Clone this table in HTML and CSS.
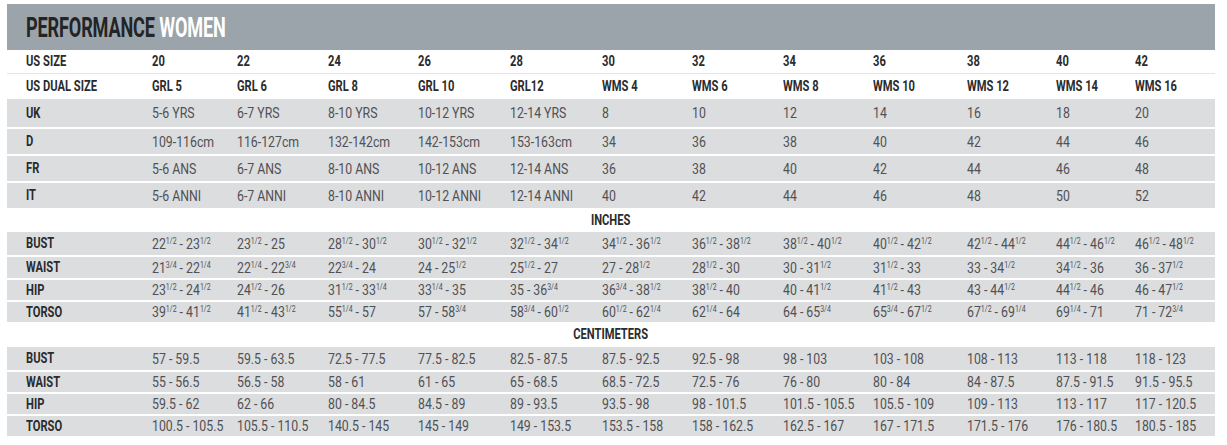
FILE: index.html
```html
<!DOCTYPE html>
<html>
<head>
<meta charset="utf-8">
<link rel="stylesheet" href="styles.css">
</head>
<body>
<div class="chart">
  <div class="title"><span class="t-text"><span class="t-dark">PERFORMANCE</span> <span class="t-light">WOMEN</span></span></div>

  <div class="row plain head line">
    <div class="lab">US SIZE</div><div>20</div><div>22</div><div>24</div><div>26</div><div>28</div><div>30</div><div>32</div><div>34</div><div>36</div><div>38</div><div>40</div><div>42</div>
  </div>
  <div class="row plain head">
    <div class="lab">US DUAL SIZE</div><div>GRL 5</div><div>GRL 6</div><div>GRL 8</div><div>GRL 10</div><div>GRL12</div><div>WMS 4</div><div>WMS 6</div><div>WMS 8</div><div>WMS 10</div><div>WMS 12</div><div>WMS 14</div><div>WMS 16</div>
  </div>

  <div class="row shade tall first">
    <div class="lab">UK</div><div>5-6 YRS</div><div>6-7 YRS</div><div>8-10 YRS</div><div>10-12 YRS</div><div>12-14 YRS</div><div>8</div><div>10</div><div>12</div><div>14</div><div>16</div><div>18</div><div>20</div>
  </div>
  <div class="row shade tall">
    <div class="lab">D</div><div>109-116cm</div><div>116-127cm</div><div>132-142cm</div><div>142-153cm</div><div>153-163cm</div><div>34</div><div>36</div><div>38</div><div>40</div><div>42</div><div>44</div><div>46</div>
  </div>
  <div class="row shade tall">
    <div class="lab">FR</div><div>5-6 ANS</div><div>6-7 ANS</div><div>8-10 ANS</div><div>10-12 ANS</div><div>12-14 ANS</div><div>36</div><div>38</div><div>40</div><div>42</div><div>44</div><div>46</div><div>48</div>
  </div>
  <div class="row shade tall">
    <div class="lab">IT</div><div>5-6 ANNI</div><div>6-7 ANNI</div><div>8-10 ANNI</div><div>10-12 ANNI</div><div>12-14 ANNI</div><div>40</div><div>42</div><div>44</div><div>46</div><div>48</div><div>50</div><div>52</div>
  </div>

  <div class="section inch"><span>INCHES</span></div>

  <div class="row shade short first">
    <div class="lab">BUST</div>
    <div>22<sup>1/2</sup> - 23<sup>1/2</sup></div><div>23<sup>1/2</sup> - 25</div><div>28<sup>1/2</sup> - 30<sup>1/2</sup></div><div>30<sup>1/2</sup> - 32<sup>1/2</sup></div><div>32<sup>1/2</sup> - 34<sup>1/2</sup></div><div>34<sup>1/2</sup> - 36<sup>1/2</sup></div><div>36<sup>1/2</sup> - 38<sup>1/2</sup></div><div>38<sup>1/2</sup> - 40<sup>1/2</sup></div><div>40<sup>1/2</sup> - 42<sup>1/2</sup></div><div>42<sup>1/2</sup> - 44<sup>1/2</sup></div><div>44<sup>1/2</sup> - 46<sup>1/2</sup></div><div>46<sup>1/2</sup> - 48<sup>1/2</sup></div>
  </div>
  <div class="row shade short s2">
    <div class="lab">WAIST</div>
    <div>21<sup>3/4</sup> - 22<sup>1/4</sup></div><div>22<sup>1/4</sup> - 22<sup>3/4</sup></div><div>22<sup>3/4</sup> - 24</div><div>24 - 25<sup>1/2</sup></div><div>25<sup>1/2</sup> - 27</div><div>27 - 28<sup>1/2</sup></div><div>28<sup>1/2</sup> - 30</div><div>30 - 31<sup>1/2</sup></div><div>31<sup>1/2</sup> - 33</div><div>33 - 34<sup>1/2</sup></div><div>34<sup>1/2</sup> - 36</div><div>36 - 37<sup>1/2</sup></div>
  </div>
  <div class="row shade short">
    <div class="lab">HIP</div>
    <div>23<sup>1/2</sup> - 24<sup>1/2</sup></div><div>24<sup>1/2</sup> - 26</div><div>31<sup>1/2</sup> - 33<sup>1/4</sup></div><div>33<sup>1/4</sup> - 35</div><div>35 - 36<sup>3/4</sup></div><div>36<sup>3/4</sup> - 38<sup>1/2</sup></div><div>38<sup>1/2</sup> - 40</div><div>40 - 41<sup>1/2</sup></div><div>41<sup>1/2</sup> - 43</div><div>43 - 44<sup>1/2</sup></div><div>44<sup>1/2</sup> - 46</div><div>46 - 47<sup>1/2</sup></div>
  </div>
  <div class="row shade short">
    <div class="lab">TORSO</div>
    <div>39<sup>1/2</sup> - 41<sup>1/2</sup></div><div>41<sup>1/2</sup> - 43<sup>1/2</sup></div><div>55<sup>1/4</sup> - 57</div><div>57 - 58<sup>3/4</sup></div><div>58<sup>3/4</sup> - 60<sup>1/2</sup></div><div>60<sup>1/2</sup> - 62<sup>1/4</sup></div><div>62<sup>1/4</sup> - 64</div><div>64 - 65<sup>3/4</sup></div><div>65<sup>3/4</sup> - 67<sup>1/2</sup></div><div>67<sup>1/2</sup> - 69<sup>1/4</sup></div><div>69<sup>1/4</sup> - 71</div><div>71 - 72<sup>3/4</sup></div>
  </div>

  <div class="section cm"><span>CENTIMETERS</span></div>

  <div class="row shade short first">
    <div class="lab">BUST</div><div>57 - 59.5</div><div>59.5 - 63.5</div><div>72.5 - 77.5</div><div>77.5 - 82.5</div><div>82.5 - 87.5</div><div>87.5 - 92.5</div><div>92.5 - 98</div><div>98 - 103</div><div>103 - 108</div><div>108 - 113</div><div>113 - 118</div><div>118 - 123</div>
  </div>
  <div class="row shade short">
    <div class="lab">WAIST</div><div>55 - 56.5</div><div>56.5 - 58</div><div>58 - 61</div><div>61 - 65</div><div>65 - 68.5</div><div>68.5 - 72.5</div><div>72.5 - 76</div><div>76 - 80</div><div>80 - 84</div><div>84 - 87.5</div><div>87.5 - 91.5</div><div>91.5 - 95.5</div>
  </div>
  <div class="row shade short">
    <div class="lab">HIP</div><div>59.5 - 62</div><div>62 - 66</div><div>80 - 84.5</div><div>84.5 - 89</div><div>89 - 93.5</div><div>93.5 - 98</div><div>98 - 101.5</div><div>101.5 - 105.5</div><div>105.5 - 109</div><div>109 - 113</div><div>113 - 117</div><div>117 - 120.5</div>
  </div>
  <div class="row shade short">
    <div class="lab">TORSO</div><div>100.5 - 105.5</div><div>105.5 - 110.5</div><div>140.5 - 145</div><div>145 - 149</div><div>149 - 153.5</div><div>153.5 - 158</div><div>158 - 162.5</div><div>162.5 - 167</div><div>167 - 171.5</div><div>171.5 - 176</div><div>176 - 180.5</div><div>180.5 - 185</div>
  </div>
</div>
</body>
</html>
```

FILE: styles.css
```css
html, body {
  margin: 0;
  padding: 0;
  background: #ffffff;
}

.chart {
  margin: 4px 0 0 7px;
  width: 1208px;
  font-family: Roboto, "Liberation Sans", sans-serif;
}

.title {
  background: #9ba3ab;
  height: 46px;
  display: flex;
  align-items: center;
  padding-left: 19px;
  font-size: 27px;
  font-weight: bold;
}

.t-text {
  display: inline-block;
  white-space: nowrap;
  transform: scaleX(0.67);
  transform-origin: 0 50%;
  letter-spacing: -0.2px;
  margin-top: 2px;
}

.t-dark { color: #232426; }
.t-light { color: #ffffff; }

.row {
  display: grid;
  grid-template-columns: 145px 85px 91px 90px 92px 92px 90px 91px 90px 94px 89px 79px 80px;
  align-items: center;
  font-size: 15px;
  color: #505154;
  white-space: nowrap;
  box-sizing: border-box;
}

.row > div {
  transform: scaleX(0.82);
  transform-origin: 0 50%;
}

.row .lab {
  padding-left: 19px;
  font-weight: bold;
  color: #2a2b2d;
  font-size: 14.5px;
  transform: scaleX(0.77);
  transform-origin: 19px 50%;
}

.plain { background: #ffffff; }

.head {
  height: 25px;
  font-weight: bold;
  color: #2a2b2d;
  font-size: 14.5px;
}
.head > div { transform: scaleX(0.77); }
.head.line {
  height: 24px;
  border-bottom: 1px solid #e3e4e6;
}

.shade {
  background: #dcdddf;
  border-top: 2px solid #ffffff;
}
.shade.first { border-top: none; }

.tall { height: 27px; }
.tall.first { height: 28px; }
.short { height: 22px; }
.short.first { height: 23px; }
.short.s2 { height: 23px; }

.section {
  display: flex;
  align-items: center;
  justify-content: center;
  font-size: 14.5px;
  font-weight: bold;
  color: #2a2b2d;
}
.section.inch { height: 24px; }
.section.cm { height: 25px; }
.section span {
  display: inline-block;
  transform: scaleX(0.77);
}

sup {
  font-size: 8.5px;
  line-height: 0;
  vertical-align: 5px;
}
```
